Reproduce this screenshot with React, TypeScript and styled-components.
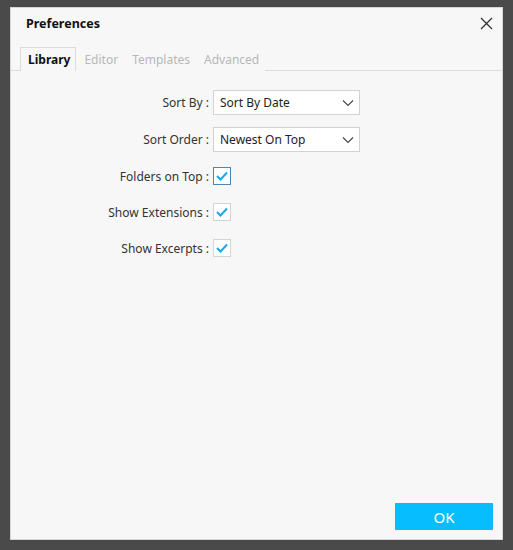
import React from "react";
import styled, { createGlobalStyle } from "styled-components";

const Global = createGlobalStyle`
  html, body { margin: 0; padding: 0; background: #4a4a4a; }
  body { font-family: "Noto Sans", "Open Sans", sans-serif; }
`;

const Page = styled.div`
  width: 513px;
  height: 550px;
  padding: 7px 0 0 10px;
  box-sizing: border-box;
`;

const Dialog = styled.div`
  width: 493px;
  height: 533px;
  box-sizing: border-box;
  background: #f7f7f7;
  border: 1px solid #d6d6d6;
  display: flex;
  flex-direction: column;
`;

const Header = styled.div`
  height: 30px;
  display: flex;
  align-items: center;
  justify-content: space-between;
  padding: 0 9px 0 15px;
`;

const Title = styled.div`
  font-size: 12.5px;
  font-weight: 700;
  color: #111;
`;

const CloseButton = styled.button`
  border: none;
  background: none;
  padding: 0;
  width: 13px;
  height: 13px;
  display: flex;
  cursor: pointer;
`;

const Tabs = styled.div`
  display: flex;
  align-items: flex-end;
  margin-top: 9px;
  padding-left: 9px;
  border-bottom: 1px solid #dcdcdc;
  height: 23px;
`;

const Tab = styled.div<{ $active?: boolean }>`
  box-sizing: border-box;
  padding: 0 5px 0 7px;
  display: flex;
  align-items: center;
  font-size: 12px;
  font-weight: ${(p) => (p.$active ? 700 : 400)};
  color: ${(p) => (p.$active ? "#111" : "#b8b8b8")};
  border: 1px solid ${(p) => (p.$active ? "#dcdcdc" : "transparent")};
  border-bottom: none;
  background: #f7f7f7;
  margin-bottom: -1px;
  height: 24px;
`;

const Form = styled.div`
  display: grid;
  grid-template-columns: 198px auto;
  column-gap: 4px;
  row-gap: 12px;
  padding-top: 19px;
  align-items: center;
`;

const Label = styled.div`
  text-align: right;
  font-size: 12px;
  color: #333;
`;

const Control = styled.div<{ $h: number }>`
  height: ${(p) => p.$h}px;
  display: flex;
  align-items: center;
`;

const Select = styled.div`
  width: 147px;
  height: 25px;
  box-sizing: border-box;
  background: #fff;
  border: 1px solid #d2d2d2;
  display: flex;
  align-items: center;
  justify-content: space-between;
  padding: 0 4px 0 6px;
  font-size: 12px;
  color: #222;
`;

const Check = styled.div<{ $focused?: boolean }>`
  width: 18px;
  height: 18px;
  box-sizing: border-box;
  background: #fff;
  border: 1px solid ${(p) => (p.$focused ? "#4b86b4" : "#d4d4d4")};
  display: flex;
  align-items: center;
  justify-content: center;
`;

const Spacer = styled.div`
  flex: 1;
`;

const Footer = styled.div`
  display: flex;
  justify-content: flex-end;
  padding: 0 9px 9px 0;
`;

const OkButton = styled.button`
  width: 98px;
  height: 27px;
  border: none;
  background: #07bdfd;
  color: #fff;
  font-family: "Noto Sans", "Open Sans", sans-serif;
  font-size: 15px;
  padding: 0;
  cursor: pointer;
`;

const Chevron = () => (
  <svg width="14" height="14" viewBox="0 0 14 14">
    <path d="M2 4.5 L7 9.5 L12 4.5" fill="none" stroke="#444" strokeWidth="1.1" />
  </svg>
);

const Tick = () => (
  <svg width="12" height="10" viewBox="0 0 12 10">
    <path d="M1 5 L4.5 8.5 L11 1.5" fill="none" stroke="#1ba6ea" strokeWidth="2" />
  </svg>
);

export default function App() {
  return (
    <Page>
      <Global />
      <Dialog>
        <Header>
          <Title>Preferences</Title>
          <CloseButton aria-label="Close">
            <svg width="13" height="13" viewBox="0 0 13 13">
              <path d="M1 1 L12 12 M12 1 L1 12" stroke="#333" strokeWidth="1.3" />
            </svg>
          </CloseButton>
        </Header>
        <Tabs>
          <Tab $active>Library</Tab>
          <Tab>Editor</Tab>
          <Tab>Templates</Tab>
          <Tab>Advanced</Tab>
        </Tabs>
        <Form>
          <Label>Sort By :</Label>
          <Control $h={25}>
            <Select>
              Sort By Date
              <Chevron />
            </Select>
          </Control>
          <Label>Sort Order :</Label>
          <Control $h={25}>
            <Select>
              Newest On Top
              <Chevron />
            </Select>
          </Control>
          <Label>Folders on Top :</Label>
          <Control $h={24}>
            <Check $focused>
              <Tick />
            </Check>
          </Control>
          <Label>Show Extensions :</Label>
          <Control $h={24}>
            <Check>
              <Tick />
            </Check>
          </Control>
          <Label>Show Excerpts :</Label>
          <Control $h={24}>
            <Check>
              <Tick />
            </Check>
          </Control>
        </Form>
        <Spacer />
        <Footer>
          <OkButton>OK</OkButton>
        </Footer>
      </Dialog>
    </Page>
  );
}
